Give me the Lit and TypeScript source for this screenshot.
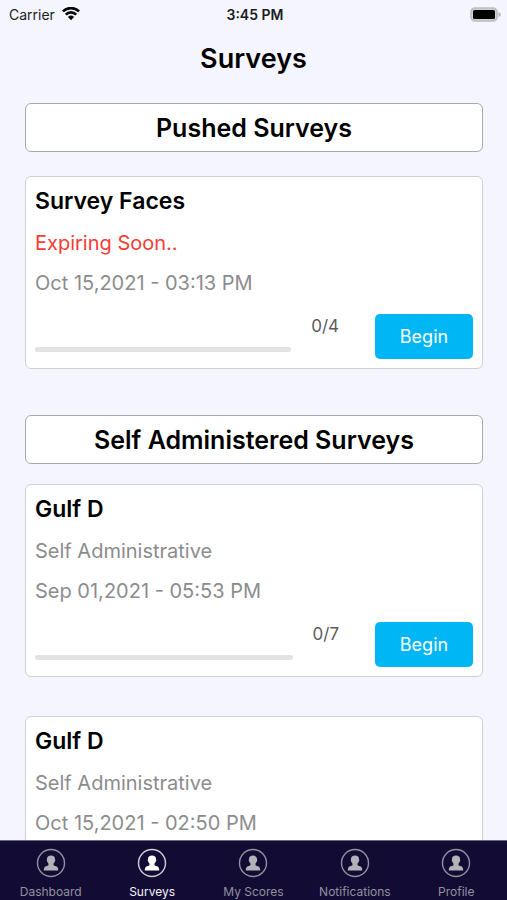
import { LitElement, html, css, svg, nothing } from "lit";
import { customElement, property } from "lit/decorators.js";
import { classMap } from "lit/directives/class-map.js";

interface Survey {
  id: string;
  name: string;
  note: string;
  urgent?: boolean;
  date: string;
  done: number;
  total: number;
}

const PUSHED: Survey[] = [
  { id: "faces", name: "Survey Faces", note: "Expiring Soon..", urgent: true, date: "Oct 15,2021 - 03:13 PM", done: 0, total: 4 },
];

const SELF_ADMINISTERED: Survey[] = [
  { id: "gulf-1", name: "Gulf D", note: "Self Administrative", date: "Sep 01,2021 - 05:53 PM", done: 0, total: 7 },
  { id: "gulf-2", name: "Gulf D", note: "Self Administrative", date: "Oct 15,2021 - 02:50 PM", done: 0, total: 7 },
];

const TABS = ["Dashboard", "Surveys", "My Scores", "Notifications", "Profile"];

@customElement("status-bar")
export class StatusBar extends LitElement {
  static styles = css`
    :host {
      display: grid;
      grid-template-columns: 1fr auto 1fr;
      align-items: center;
      height: 28px;
      padding: 0 6px 0 9px;
      font-size: 14px;
      color: #1c1c22;
    }
    .carrier {
      display: flex;
      align-items: center;
      gap: 7px;
    }
    .time {
      font-weight: 600;
    }
    .battery {
      justify-self: end;
    }
    svg {
      display: block;
    }
  `;

  render() {
    return html`
      <div class="carrier">
        <span>Carrier</span>
        <svg width="18" height="14" viewBox="0 0 18 14" fill="none" stroke="#08080c" stroke-width="2.7" aria-hidden="true">
          <path d="M0.9 4.4a11.6 11.6 0 0 1 16.2 0" />
          <path d="M3.8 7.6a7.4 7.4 0 0 1 10.4 0" />
          <path d="M9 13.2 5.9 10a4.500 4.500 0 0 1 6.200 0z" fill="#08080c" stroke="none" />
        </svg>
      </div>
      <span class="time">3:45 PM</span>
      <svg class="battery" width="31" height="15" viewBox="0 0 31 15" aria-hidden="true">
        <rect x="1" y="1" width="26" height="13" rx="4" fill="#d0d0d3" stroke="#bcbcc0" stroke-width="1.6" />
        <rect x="3" y="3" width="22" height="9" rx="1.5" fill="#000" />
        <path d="M28.5 5c3 1 3 4 0 5z" fill="#b4b4b8" />
      </svg>
    `;
  }
}

@customElement("survey-card")
export class SurveyCard extends LitElement {
  @property({ attribute: false }) survey!: Survey;

  static styles = css`
    :host {
      display: block;
    }
    .card {
      display: flex;
      flex-direction: column;
      padding: 9px;
      border: 1px solid #cfd0d4;
      border-radius: 6px;
      background: #fff;
    }
    .name {
      margin: 0;
      font-size: 23px;
      line-height: 30px;
      font-weight: 600;
      color: #000;
    }
    .line {
      margin: 0;
      padding-top: 10px;
      font-size: 20px;
      line-height: 30px;
      color: #8c8c8f;
    }
    .note {
      padding-top: 12px;
    }
    .urgent {
      color: #f53d35;
    }
    .foot {
      display: flex;
      align-items: flex-end;
      margin-top: 16px;
    }
    .progress {
      flex: 1;
      min-width: 0;
      height: 5px;
      margin-bottom: 7px;
      appearance: none;
      border: 0;
      border-radius: 2px;
      overflow: hidden;
      background: #e3e3e4;
    }
    .progress::-webkit-progress-bar {
      background: #e3e3e4;
    }
    .progress::-webkit-progress-value {
      background: #00b6f5;
    }
    .count {
      align-self: flex-start;
      margin: 0 36px 0 20px;
      font-size: 17px;
      line-height: 24px;
      color: #5c5c60;
    }
    .begin {
      width: 98px;
      height: 45px;
      padding: 0;
      border: 0;
      border-radius: 5px;
      background: #00b6f5;
      color: #fff;
      font: inherit;
      font-size: 18px;
    }
  `;

  render() {
    const s = this.survey;
    return html`
      <article class="card">
        <h3 class="name">${s.name}</h3>
        <p class=${classMap({ line: true, note: true, urgent: !!s.urgent })}>${s.note}</p>
        <p class="line">${s.date}</p>
        <div class="foot">
          <progress class="progress" aria-label="${s.name} progress" value=${s.done} max=${s.total}></progress>
          <span class="count">${s.done}/${s.total}</span>
          <button class="begin" type="button">Begin</button>
        </div>
      </article>
    `;
  }
}

@customElement("tab-bar")
export class TabBar extends LitElement {
  @property() active = "Surveys";

  static styles = css`
    :host {
      display: block;
      border-top: 1px solid #6a6880;
      background: #120c34;
    }
    .tabs {
      display: grid;
      grid-template-columns: repeat(5, 1fr);
    }
    .tab {
      display: flex;
      flex-direction: column;
      align-items: center;
      gap: 5px;
      padding: 7px 0 0;
      font-size: 12px;
      line-height: 17px;
      color: #92909f;
      text-decoration: none;
      white-space: nowrap;
    }
    .active {
      color: #f4f3fa;
    }
    .icon {
      display: block;
      color: #b3b2b8;
    }
    .active .icon {
      color: #fff;
    }
  `;

  private icon() {
    return html`
      <svg class="icon" width="30" height="30" viewBox="0 0 30 30" aria-hidden="true">
        ${svg`
          <circle cx="15" cy="15" r="13.5" fill="none" stroke="currentColor" stroke-opacity=".8" stroke-width="1.4" />
          <path fill="currentColor" d="M15 7.600c2.700 0 4 1.300 4 3.600 0 .4.300.6.300 1s-.3 1-.6 1.200c-.2.900-.6 1.500-1.200 2v1.500c.3.700 1.400.9 2.500 1.400 1.600.7 2.200 1.700 2.200 4.200H7.800c0-2.500.6-3.500 2.200-4.200 1.100-.5 2.200-.7 2.500-1.400v-1.500c-.6-.5-1-1.100-1.200-2-.3-.2-.6-.8-.6-1.200s.3-.6.300-1c0-2.300 1.300-3.600 4-3.600z" />
        `}
      </svg>
    `;
  }

  render() {
    return html`
      <nav class="tabs" aria-label="Main">
        ${TABS.map(
          (name) => html`
            <a
              class=${classMap({ tab: true, active: name === this.active })}
              href="#"
              aria-current=${name === this.active ? "page" : nothing}
            >
              ${this.icon()}
              <span>${name}</span>
            </a>
          `,
        )}
      </nav>
    `;
  }
}

@customElement("app-root")
export class AppRoot extends LitElement {
  static styles = css`
    :host {
      display: flex;
      flex-direction: column;
      height: 100vh;
      background: #f4f5fe;
      font-family: Inter, "Liberation Sans", sans-serif;
      color: #000;
    }
    .title {
      margin: 0;
      padding: 13px 0 11px;
      font-size: 27px;
      line-height: 36px;
      font-weight: 600;
      text-align: center;
    }
    .content {
      flex: 1;
      min-height: 0;
      overflow-y: auto;
      scrollbar-width: none;
      padding: 15px 24px 0 25px;
    }
    .section {
      margin-bottom: 46px;
    }
    .heading {
      margin: 0 0 24px;
      padding-top: 2px;
      border: 1px solid #a9aaae;
      border-radius: 6px;
      background: #fff;
      font-size: 25px;
      line-height: 45px;
      font-weight: 600;
      text-align: center;
    }
    .tight {
      margin-bottom: 20px;
    }
    .list {
      display: flex;
      flex-direction: column;
      gap: 39px;
    }
  `;

  private section(title: string, surveys: Survey[], tight = false) {
    return html`
      <section class="section">
        <h2 class=${classMap({ heading: true, tight })}>${title}</h2>
        <div class="list">${surveys.map((s) => html`<survey-card .survey=${s}></survey-card>`)}</div>
      </section>
    `;
  }

  render() {
    return html`
      <status-bar></status-bar>
      <h1 class="title">Surveys</h1>
      <main class="content">
        ${this.section("Pushed Surveys", PUSHED)}
        ${this.section("Self Administered Surveys", SELF_ADMINISTERED, true)}
      </main>
      <tab-bar active="Surveys"></tab-bar>
    `;
  }
}
